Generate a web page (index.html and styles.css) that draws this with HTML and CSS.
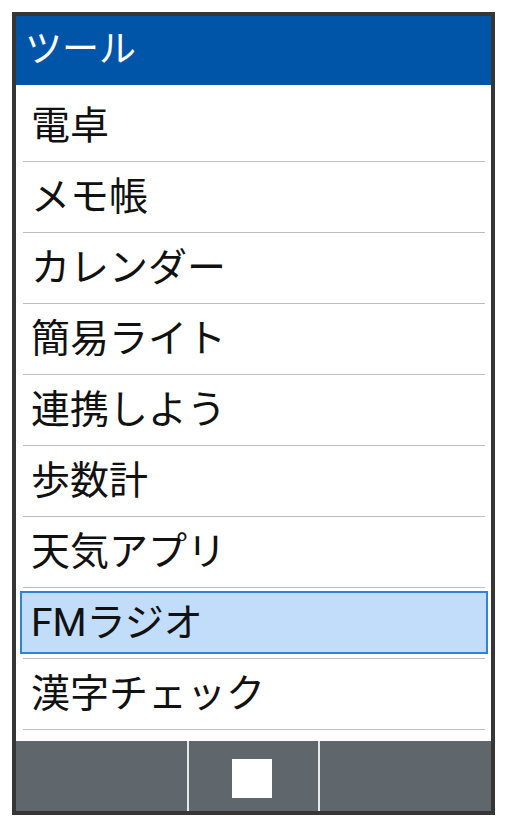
FILE: index.html
```html
<!DOCTYPE html>
<html lang="ja">
<head>
<meta charset="utf-8">
<title>ツール</title>
<link rel="stylesheet" href="styles.css">
</head>
<body>
<div class="phone">
  <header class="title">ツール</header>
  <ul class="menu">
    <li class="item"><span class="label">電卓</span></li>
    <li class="item"><span class="label">メモ帳</span></li>
    <li class="item"><span class="label">カレンダー</span></li>
    <li class="item"><span class="label">簡易ライト</span></li>
    <li class="item"><span class="label">連携しよう</span></li>
    <li class="item"><span class="label">歩数計</span></li>
    <li class="item"><span class="label">天気アプリ</span></li>
    <li class="item"><span class="label selected">FMラジオ</span></li>
    <li class="item"><span class="label">漢字チェック</span></li>
  </ul>
  <footer class="softkeys">
    <div class="key"></div>
    <div class="divider"></div>
    <div class="key center"><span class="square"></span></div>
    <div class="divider"></div>
    <div class="key"></div>
  </footer>
</div>
</body>
</html>
```
FILE: styles.css
```css
html, body {
  margin: 0;
  padding: 0;
  background: #ffffff;
}
body {
  font-family: Roboto, "Noto Sans CJK JP", "Noto Sans", sans-serif;
  color: #111111;
}
.phone {
  box-sizing: border-box;
  margin: 12px 0 0 12px;
  width: 483px;
  height: 803px;
  border: 4px solid #363636;
  display: flex;
  flex-direction: column;
  background: #ffffff;
}
.title {
  height: 69px;
  flex: none;
  background: #0055a8;
  color: #ffffff;
  font-size: 37px;
  line-height: 67px;
  padding-left: 9px;
}
.menu {
  list-style: none;
  margin: 0;
  padding: 6px 0 0 0;
  flex: 1;
}
.item {
  margin: 0 6px 0 7px;
  height: 70px;
  border-bottom: 1px solid #bdbdbd;
  display: flex;
}
.label {
  flex: 1;
  margin: 3px -3px 4px -3px;
  border: 2px solid transparent;
  padding-left: 9px;
  font-size: 39px;
  line-height: 60px;
  white-space: nowrap;
}
.label.selected {
  background: #c1ddf9;
  border-color: #3382d9;
}
.softkeys {
  flex: none;
  height: 70px;
  background: #5f676d;
  display: grid;
  grid-template-columns: 171px 2px 129px 2px 171px;
}
.divider {
  background: #e6e8e9;
}
.key.center {
  display: flex;
  justify-content: center;
  align-items: flex-start;
}
.square {
  width: 40px;
  height: 39px;
  margin-top: 18px;
  margin-right: 3px;
  background: #ffffff;
}
```
